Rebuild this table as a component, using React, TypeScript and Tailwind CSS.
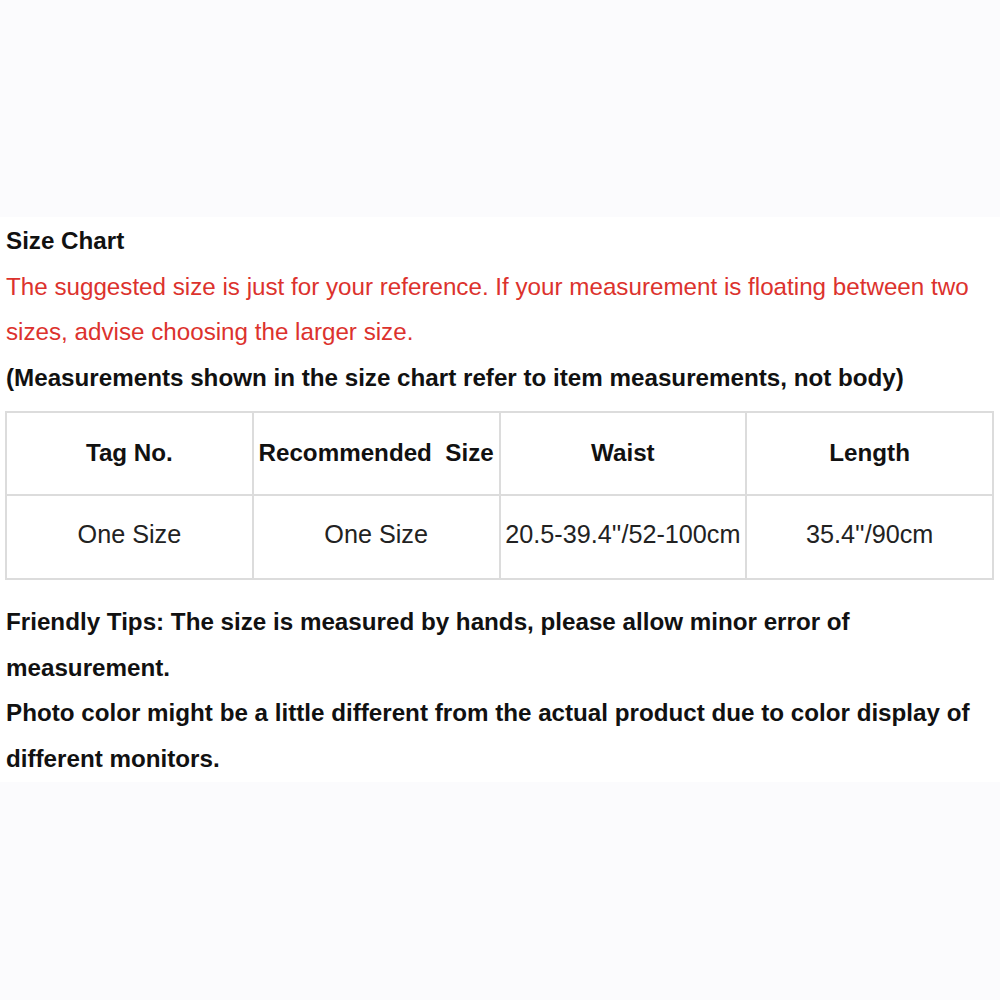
const headers = ["Tag No.", "Recommended\u00a0 Size", "Waist", "Length"];
const values = ["One Size", "One Size", "20.5-39.4''/52-100cm", "35.4''/90cm"];

export default function App() {
  return (
    <div
      className="min-h-screen bg-[#fbfbfd] pt-[217px]"
      style={{ fontFamily: '"Liberation Sans", Arial, sans-serif' }}
    >
      <div className="bg-white pl-[6px] pr-[6px] pt-[1px] pb-0 text-[24.2px] leading-[45.7px]">
        <div className="font-bold text-[#111]">Size Chart</div>
        <div className="text-[#dc322d] pr-[16px]">
          The suggested size is just for your reference. If your measurement is floating between two
          sizes, advise choosing the larger size.
        </div>
        <div className="font-bold text-[#111]">
          (Measurements shown in the size chart refer to item measurements, not body)
        </div>

        <table className="mt-[10px] -ml-[1px] w-[989px] table-fixed border-collapse">
          <tbody>
            <tr>
              {headers.map((h) => (
                <th
                  key={h}
                  className="h-[83px] border-2 border-[#dcdcdc] text-center font-bold text-[#111] whitespace-nowrap"
                >
                  {h}
                </th>
              ))}
            </tr>
            <tr>
              {values.map((v, i) => (
                <td
                  key={i}
                  className="h-[84px] border-2 border-[#dcdcdc] pb-[3px] text-center text-[25.2px] text-[#222] whitespace-nowrap"
                >
                  {v}
                </td>
              ))}
            </tr>
          </tbody>
        </table>

        <div className="mt-[19px] font-bold text-[#111] pr-[100px]">
          Friendly Tips: The size is measured by hands, please allow minor error of measurement.
        </div>
        <div className="font-bold text-[#111] pr-[6px]">
          Photo color might be a little different from the actual product due to color display of
          different monitors.
        </div>
      </div>
    </div>
  );
}
